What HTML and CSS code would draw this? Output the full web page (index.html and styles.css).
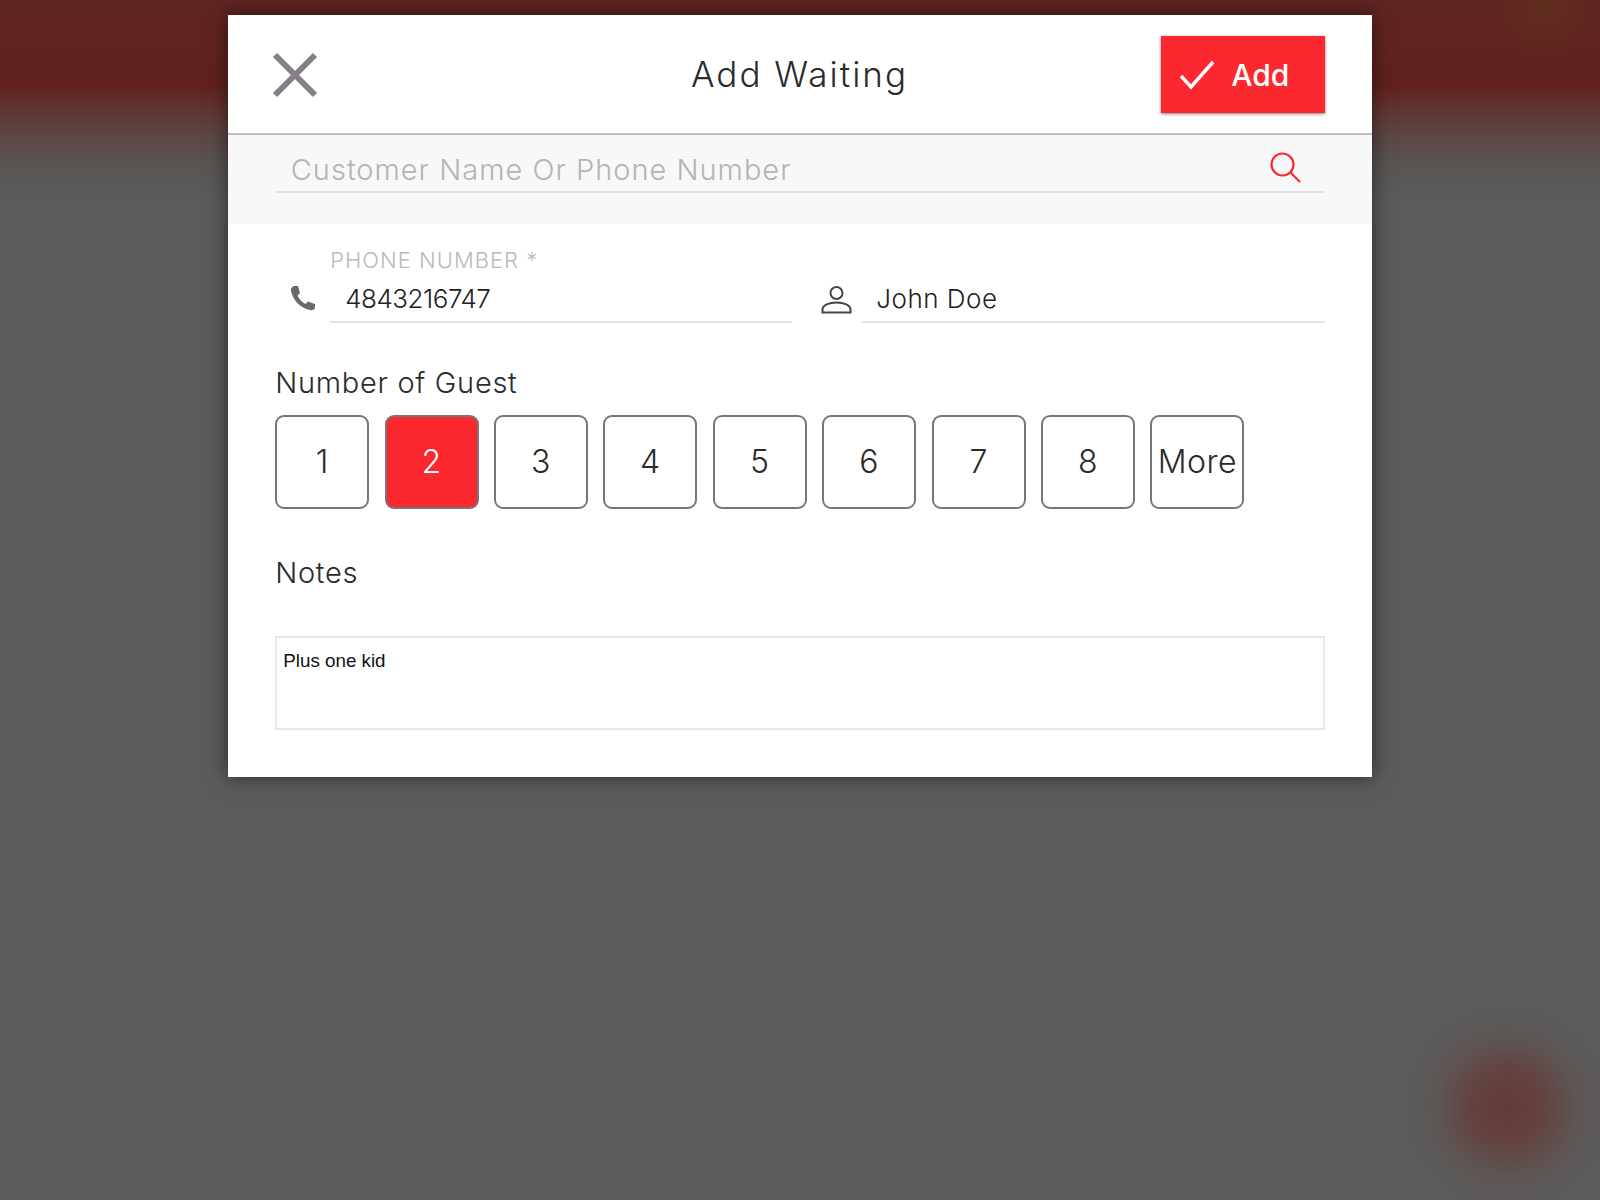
FILE: index.html
```html
<!DOCTYPE html>
<html lang="en">
<head>
<meta charset="utf-8">
<title>Add Waiting</title>
<link rel="stylesheet" href="styles.css">
</head>
<body>
<main class="modal">
  <header class="modal-head">
    <button class="close" aria-label="Close">
      <svg class="close-icon" viewBox="0 0 46 46"><path d="M3 3 43 43M43 3 3 43" /></svg>
    </button>
    <h1 class="title">Add Waiting</h1>
    <button class="add">
      <svg class="check-icon" viewBox="0 0 36 30"><path d="M2 16 12 27 34 2" /></svg>
      <span>Add</span>
    </button>
  </header>

  <section class="search">
    <div class="search-line">
      <span class="placeholder">Customer Name Or Phone Number</span>
      <svg class="search-icon" viewBox="0 0 31 31"><circle cx="12.5" cy="12.5" r="11" /><path d="M20.5 20.5 30 30" /></svg>
    </div>
  </section>

  <section class="contact">
    <div class="field">
      <svg class="phone-icon" viewBox="0 0 26 26"><path d="M5 1H8L10 8 7.5 10.5C9 14 12 17.5 15.5 19L18 16.500 25 19V22C25 24 23 26 20 25 10 23 3 15 1 6 .5 3 3 1 5 1Z" /></svg>
      <div class="field-body">
        <label class="float-label">PHONE NUMBER *</label>
        <div class="value value-phone">4843216747</div>
      </div>
    </div>
    <div class="field">
      <svg class="person-icon" viewBox="0 0 31 29"><circle cx="15.5" cy="8" r="6" /><path d="M1.500 27.500V24.500C1.500 20 8 17.500 15.500 17.500S29.500 20 29.500 24.500V27.500Z" /></svg>
      <div class="field-body">
        <div class="value">John Doe</div>
      </div>
    </div>
  </section>

  <section class="guests">
    <h2 class="section-title">Number of Guest</h2>
    <div class="guest-row">
      <button class="guest">1</button>
      <button class="guest selected">2</button>
      <button class="guest">3</button>
      <button class="guest">4</button>
      <button class="guest">5</button>
      <button class="guest">6</button>
      <button class="guest">7</button>
      <button class="guest">8</button>
      <button class="guest">More</button>
    </div>
  </section>

  <section class="notes">
    <h2 class="section-title">Notes</h2>
    <div class="notes-box">Plus one kid</div>
  </section>
</main>
</body>
</html>
```
FILE: styles.css
```css
* { box-sizing: border-box; }
html, body { margin: 0; height: 100%; }
body {
  height: 1200px;
  overflow: hidden;
  font-family: Inter, "Liberation Sans", sans-serif;
  font-weight: 300;
  color: #2b2b2b;
  padding-top: 15px;
  display: flex;
  justify-content: center;
  align-items: flex-start;
  background-color: #5b5b5b;
  background-image:
    radial-gradient(circle at 1507px 1107px, rgba(100, 58, 55, 1) 0, rgba(100, 62, 58, .85) 35px, rgba(96, 80, 78, .5) 70px, rgba(91, 91, 91, 0) 100px),
    radial-gradient(circle at 1545px 8px, rgba(98, 50, 28, .7) 0, rgba(98, 50, 28, 0) 55px),
    linear-gradient(180deg, #5f2522 0, #60211e 85px, #603330 108px, #5c4644 135px, #585553 165px, #5b5b5b 200px);
}
button { font: inherit; color: inherit; padding: 0; cursor: pointer; }

.modal {
  width: 1143.5px;
  height: 762px;
  background: #fff;
  box-shadow: 0 0 18px rgba(0, 0, 0, .55);
}

.modal-head {
  height: 120px;
  border-bottom: 2px solid #bcbcbc;
  padding: 20px 46.5px 20px 44px;
  display: flex;
  align-items: center;
  justify-content: space-between;
  position: relative;
}
.close { background: none; border: 0; width: 46px; height: 46px; display: flex; margin-top: 2px; }
.close-icon { width: 46px; height: 46px; }
.close-icon path { stroke: #858088; stroke-width: 6; fill: none; }
.title {
  position: absolute;
  left: 0; right: 1px;
  text-align: center;
  margin: 0;
  font-size: 35px;
  font-weight: 300;
  letter-spacing: 2px;
  pointer-events: none;
}
.add {
  width: 164px;
  height: 77px;
  background: #fc2830;
  border: 0;
  color: #fff;
  font-size: 30px;
  font-weight: 500;
  box-shadow: 0 1px 3px rgba(0, 0, 0, .5);
  display: flex;
  align-items: center;
  gap: 16px;
  padding-left: 18px;
}
.add span { margin-top: 1px; }
.check-icon { width: 36px; height: 30px; margin-top: 2px; }
.check-icon path { stroke: #fff; stroke-width: 3.5; fill: none; }

.search {
  height: 89px;
  background: #f8f8f8;
  padding: 0 46.5px 0 47px;
}
.search-line {
  height: 58px;
  border-bottom: 2px solid #e3e3e3;
  display: flex;
  align-items: center;
  justify-content: space-between;
  padding: 13px 24px 0 15.5px;
}
.placeholder { font-size: 29px; color: #b4b4b4; letter-spacing: 1px; }
.search-icon { width: 31px; height: 31px; margin-top: -4px; }
.search-icon circle, .search-icon path { stroke: #fc2830; stroke-width: 2.2; fill: none; }

.contact {
  display: grid;
  grid-template-columns: 517px 1fr;
  column-gap: 29px;
  padding: 0 46.5px 0 47px;
  height: 99px;
}
.field { display: flex; align-items: flex-end; }
.field-body { flex: 1; border-bottom: 2px solid #e6e6e6; position: relative; height: 44px; padding: 1px 15px 0; }
.float-label {
  position: absolute;
  left: 0;
  top: -32px;
  font-size: 22px;
  color: #b9b9b9;
  letter-spacing: 1px;
}
.value { font-size: 26px; color: #222; letter-spacing: .5px; line-height: 38px; }
.value-phone { letter-spacing: -.5px; }
.phone-icon { width: 26px; height: 26px; margin: 0 14px 12px 15px; flex: none; }
.phone-icon path { fill: #6a6a6a; }
.person-icon { width: 31px; height: 29px; margin: 0 9px 9px 0; flex: none; }
.person-icon circle, .person-icon path { stroke: #444; stroke-width: 2; fill: none; }

.section-title { margin: 0; font-size: 29px; font-weight: 300; letter-spacing: .7px; line-height: 34px; }

.guests { padding: 42.5px 46.5px 0 47px; }
.guest-row { display: flex; gap: 15.4px; margin-top: 15px; }
.guest {
  width: 94px;
  height: 94px;
  background: #fff;
  border: 2px solid #777;
  border-radius: 9px;
  font-size: 32px;
  font-weight: 300;
  letter-spacing: .5px;
  white-space: nowrap;
}
.selected { background: #fc2830; color: #fff; }

.notes { padding: 47px 46.5px 0 47px; }
.notes-box {
  margin-top: 46.5px;
  height: 94px;
  border: 2px solid #e8e8e8;
  padding: 12px 6px;
  font-family: "Liberation Sans", Arial, sans-serif;
  font-weight: 400;
  font-size: 18.8px;
  color: #111;
}
```
